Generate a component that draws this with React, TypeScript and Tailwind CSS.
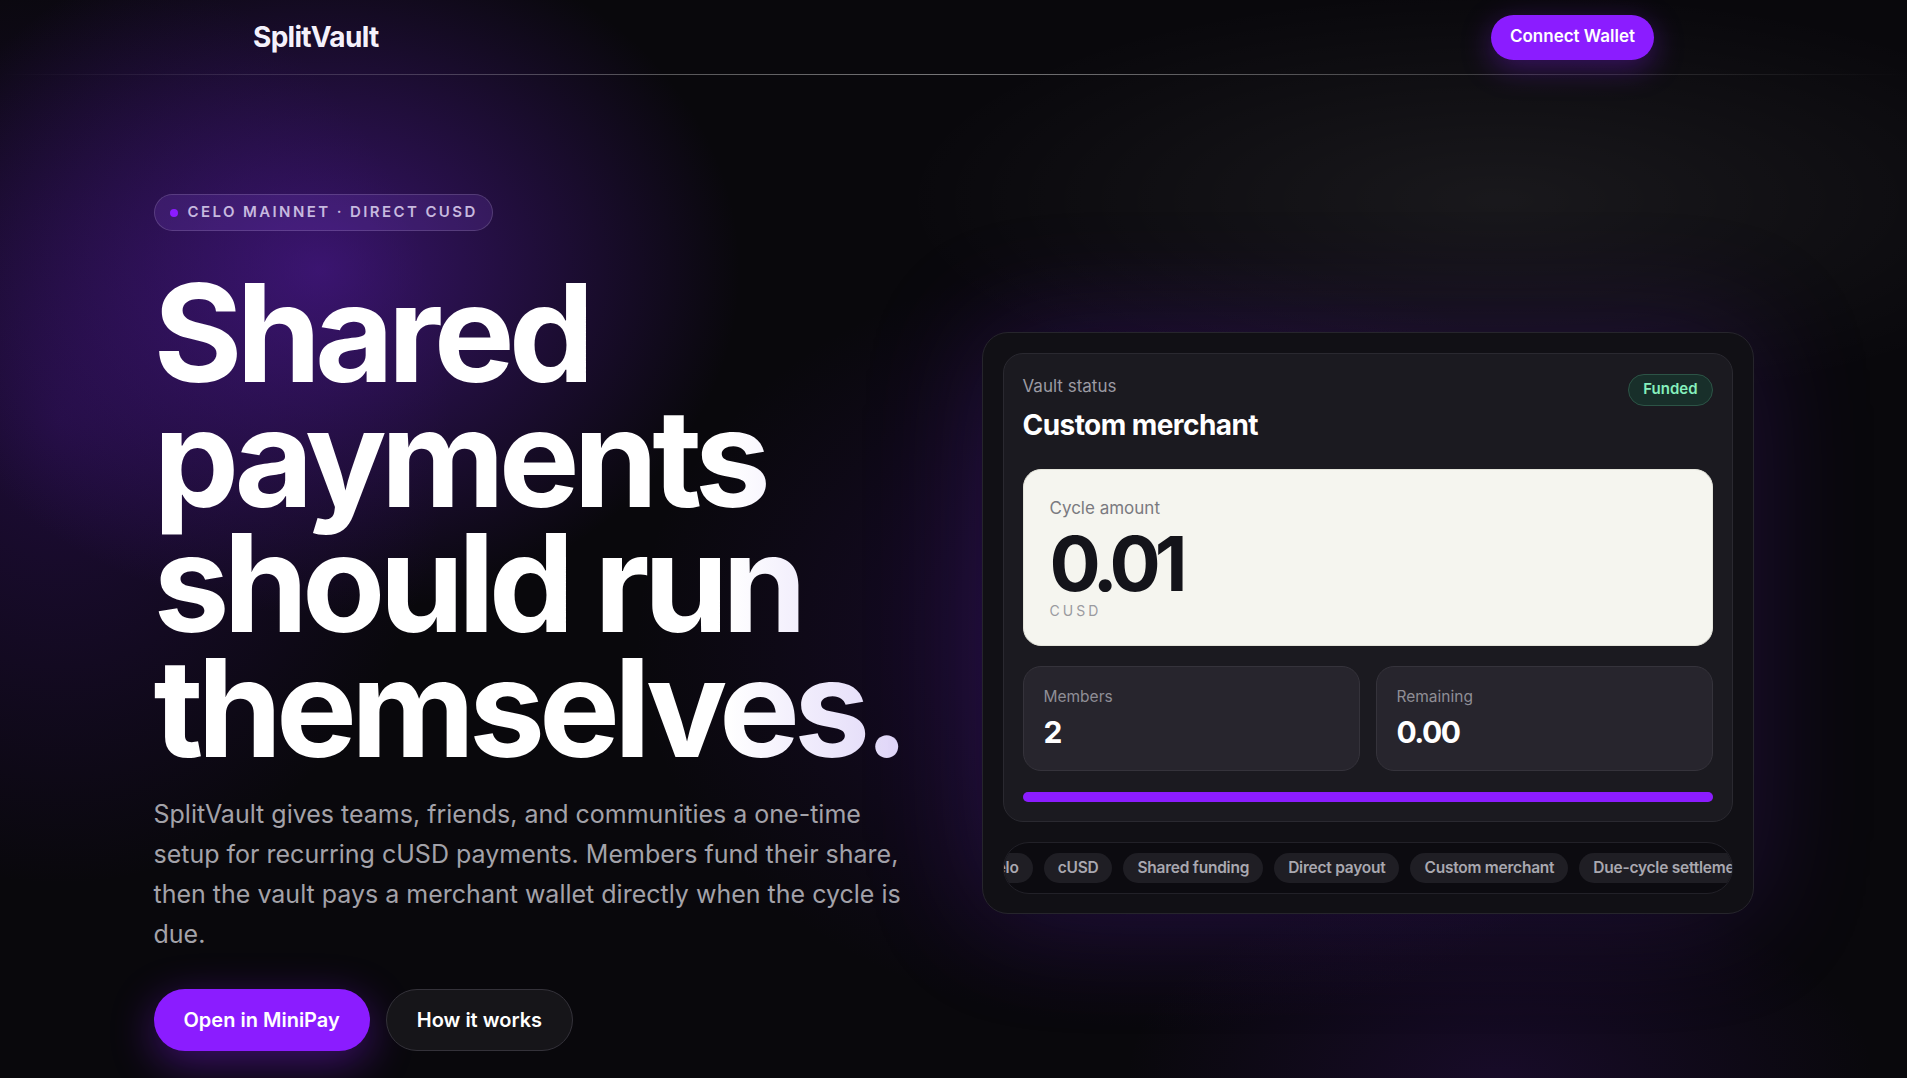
import React from "react";

const chips = ["Celo", "cUSD", "Shared funding", "Direct payout", "Custom merchant", "Due-cycle settlement", "Celo", "cUSD"];

export default function App() {
  return (
    <div
      className="min-h-screen w-full bg-[#09080c] text-white bg-[radial-gradient(560px_460px_at_320px_270px,rgba(95,30,185,0.55),transparent_75%),radial-gradient(520px_620px_at_60px_420px,rgba(70,20,140,0.35),transparent_75%),radial-gradient(700px_520px_at_1160px_640px,rgba(75,20,145,0.28),transparent_75%),radial-gradient(800px_280px_at_1500px_200px,rgba(255,255,255,0.065),transparent_75%),radial-gradient(500px_260px_at_1500px_1078px,rgba(90,25,170,0.18),transparent_75%)]"
      style={{ fontFamily: "Inter, 'Noto Sans', sans-serif" }}
    >
      {/* Nav */}
      <header>
        <div className="mx-auto flex h-[74px] max-w-[1401px] items-center justify-between">
          <div className="text-[28px] font-bold tracking-[-0.025em] text-[#f4f1fb]">SplitVault</div>
          <button className="h-[45px] rounded-full bg-[#8b1cff] px-[19px] text-[17px] font-semibold text-white shadow-[0_8px_30px_rgba(139,28,255,0.35)]">
            Connect Wallet
          </button>
        </div>
        <div className="h-px w-full bg-gradient-to-r from-transparent via-white/45 to-transparent" />
      </header>

      {/* Hero */}
      <main className="mx-auto grid max-w-[1600px] grid-cols-[1fr_772px] items-center gap-16 pt-[119px]">
        <section>
          <div className="inline-flex h-[37px] items-center gap-[10px] rounded-full border border-white/15 bg-[rgba(150,90,240,0.16)] pl-[15px] pr-[14px]">
            <span className="h-[8px] w-[8px] rounded-full bg-[#8b1cff]" />
            <span className="text-[15px] font-semibold uppercase tracking-[0.16em] text-[#c7b9df]">
              Celo mainnet · direct cUSD
            </span>
          </div>

          <h1 className="mt-[39px] bg-gradient-to-r from-white from-75% to-[#ddd3f7] bg-clip-text pb-1 text-[136px] font-bold leading-[125px] tracking-[-0.045em] text-transparent">
            Shared
            <br />
            payments
            <br />
            should run
            <br />
            themselves.
          </h1>

          <p className="mt-[20px] max-w-[765px] text-[25px] leading-[40px] text-[#a3a2a9]">
            SplitVault gives teams, friends, and communities a one-time setup for recurring cUSD payments. Members fund their share, then the vault pays a merchant wallet directly when the cycle is due.
          </p>

          <div className="mt-[35px] flex gap-4">
            <button className="h-[62px] rounded-full bg-[#8b1cff] px-[30px] text-[20px] font-semibold text-white shadow-[0_12px_44px_rgba(139,28,255,0.4)]">
              Open in MiniPay
            </button>
            <button className="h-[62px] rounded-full border border-[#34323a] bg-[#161519] px-[30px] text-[20px] font-semibold text-white">
              How it works
            </button>
          </div>
        </section>

        {/* Vault card */}
        <section className="rounded-[26px] border border-[#26252c] bg-[#111015] px-[20px] pb-[19px] pt-[20px] shadow-[0_0_120px_rgba(110,35,210,0.22)]">
          <div className="rounded-[20px] border border-[#2a2930] bg-[#1b1a20] px-[19px] pb-[19px] pt-[20px]">
            <div className="flex items-start justify-between">
              <div>
                <div className="text-[17px] leading-[24px] text-[#9c9ba3]">Vault status</div>
                <div className="mt-[10px] text-[28px] font-bold leading-[34px] tracking-[-0.02em] text-white">
                  Custom merchant
                </div>
              </div>
              <span className="flex h-[32px] items-center rounded-full border border-[#2c5446] bg-[#182f2a] px-[14px] text-[15px] font-semibold text-[#86efbd]">
                Funded
              </span>
            </div>

            <div className="mt-[27px] rounded-[18px] border border-[#e5e5dc] bg-[#f5f5ef] px-[26px] pb-[24px] pt-[26px]">
              <div className="text-[17px] leading-[24px] text-[#7a7a80]">Cycle amount</div>
              <div className="mt-[5px] text-[76px] font-bold leading-[76px] tracking-[-0.08em] text-[#14141a]">0.01</div>
              <div className="text-[14px] leading-[20px] tracking-[0.22em] text-[#9a9a9f]">CUSD</div>
            </div>

            <div className="mt-[20px] grid grid-cols-2 gap-4">
              <div className="rounded-[18px] border border-[#35333b] bg-[#27252d] px-[20px] pb-[20px] pt-[18px]">
                <div className="text-[15.5px] leading-[24px] text-[#8f8e96]">Members</div>
                <div className="mt-[5px] text-[30px] font-bold leading-[36px] text-white">2</div>
              </div>
              <div className="rounded-[18px] border border-[#35333b] bg-[#27252d] px-[20px] pb-[20px] pt-[18px]">
                <div className="text-[15.5px] leading-[24px] text-[#8f8e96]">Remaining</div>
                <div className="mt-[5px] text-[30px] font-bold leading-[36px] tracking-[-0.05em] text-white">0.00</div>
              </div>
            </div>

            <div className="mt-[21px] h-[10px] w-full rounded-full bg-[#2a2830]">
              <div className="h-full w-full rounded-full bg-[#8b1cff]" />
            </div>
          </div>

          <div className="mt-[20px] overflow-hidden rounded-full border border-[#222128] bg-[#0c0b10] py-[10px]">
            <div className="-ml-[32px] flex w-max gap-[11px]">
              {chips.map((c, i) => (
                <span
                  key={i}
                  className="flex h-[30px] items-center whitespace-nowrap rounded-full bg-[#1f1e24] px-[14px] text-[15.5px] font-semibold tracking-[-0.015em] text-[#a9a8b0]"
                >
                  {c}
                </span>
              ))}
            </div>
          </div>
        </section>
      </main>
      <div className="h-[40px]" />
    </div>
  );
}
